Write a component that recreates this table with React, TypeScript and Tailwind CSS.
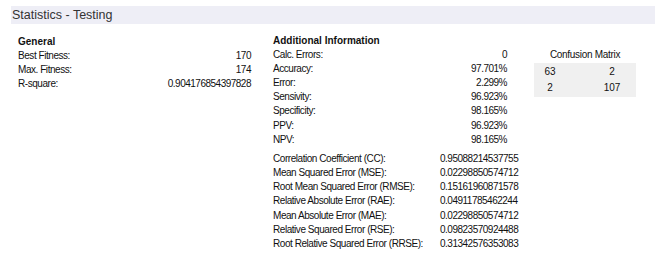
import React from "react";

type Row = { label: string; value: string };

const general: Row[] = [
  { label: "Best Fitness:", value: "170" },
  { label: "Max. Fitness:", value: "174" },
  { label: "R-square:", value: "0.904176854397828" },
];

const classification: Row[] = [
  { label: "Calc. Errors:", value: "0" },
  { label: "Accuracy:", value: "97.701%" },
  { label: "Error:", value: "2.299%" },
  { label: "Sensivity:", value: "96.923%" },
  { label: "Specificity:", value: "98.165%" },
  { label: "PPV:", value: "96.923%" },
  { label: "NPV:", value: "98.165%" },
];

const regression: Row[] = [
  { label: "Correlation Coefficient (CC):", value: "0.95088214537755" },
  { label: "Mean Squared Error (MSE):", value: "0.02298850574712" },
  { label: "Root Mean Squared Error (RMSE):", value: "0.15161960871578" },
  { label: "Relative Absolute Error (RAE):", value: "0.04911785462244" },
  { label: "Mean Absolute Error (MAE):", value: "0.02298850574712" },
  { label: "Relative Squared Error (RSE):", value: "0.09823570924488" },
  { label: "Root Relative Squared Error (RRSE):", value: "0.31342576353083" },
];

const matrix = [
  ["63", "2"],
  ["2", "107"],
];

function RightRows({ rows }: { rows: Row[] }) {
  return (
    <div>
      {rows.map((r) => (
        <div key={r.label} className="flex h-[14.2px] items-center justify-between">
          <span className="tracking-[-0.45px] whitespace-nowrap">{r.label}</span>
          <span className="tracking-[-0.5px]">{r.value}</span>
        </div>
      ))}
    </div>
  );
}

export default function App() {
  return (
    <div
      className="w-[666px] h-[261px] bg-white text-[10px] text-[#111]"
      style={{ fontFamily: '"Liberation Sans", Arial, sans-serif' }}
    >
      <div className="ml-[11px] pt-[6px]">
        <div className="flex h-[18px] w-[644px] items-center bg-[#eeeef6] pl-[1px] text-[12.5px] text-[#333]">
          Statistics - Testing
        </div>
      </div>

      <div className="mt-[10px] flex">
        {/* general block */}
        <div className="ml-[18px] w-[233px] shrink-0">
          <div className="flex h-[14px] items-center font-bold">General</div>
          <RightRows rows={general} />
        </div>

        {/* additional information */}
        <div className="ml-[22px] w-[234px] shrink-0">
          <div className="flex h-[13px] items-center font-bold">Additional Information</div>
          <RightRows rows={classification} />
          <div className="mt-[5px]">
            {regression.map((r) => (
              <div key={r.label} className="flex h-[14.2px] items-center whitespace-nowrap">
                <span className="w-[167px] shrink-0 tracking-[-0.45px]">{r.label}</span>
                <span className="shrink-0 tracking-[-0.5px]">{r.value}</span>
              </div>
            ))}
          </div>
        </div>

        {/* confusion matrix */}
        <div className="ml-[27px] w-[102px] shrink-0">
          <div className="mt-[13px] flex h-[14px] items-center justify-center tracking-[-0.3px]">
            Confusion Matrix
          </div>
          <div className="mt-[2px] bg-[#f0f0f0] pb-[2px]">
            {matrix.map((row, i) => (
              <div key={i} className="flex h-[16px] items-center">
                <span className="w-[32px] text-center">{row[0]}</span>
                <span className="ml-[30px] w-[32px] text-center">{row[1]}</span>
              </div>
            ))}
          </div>
        </div>
      </div>
    </div>
  );
}
